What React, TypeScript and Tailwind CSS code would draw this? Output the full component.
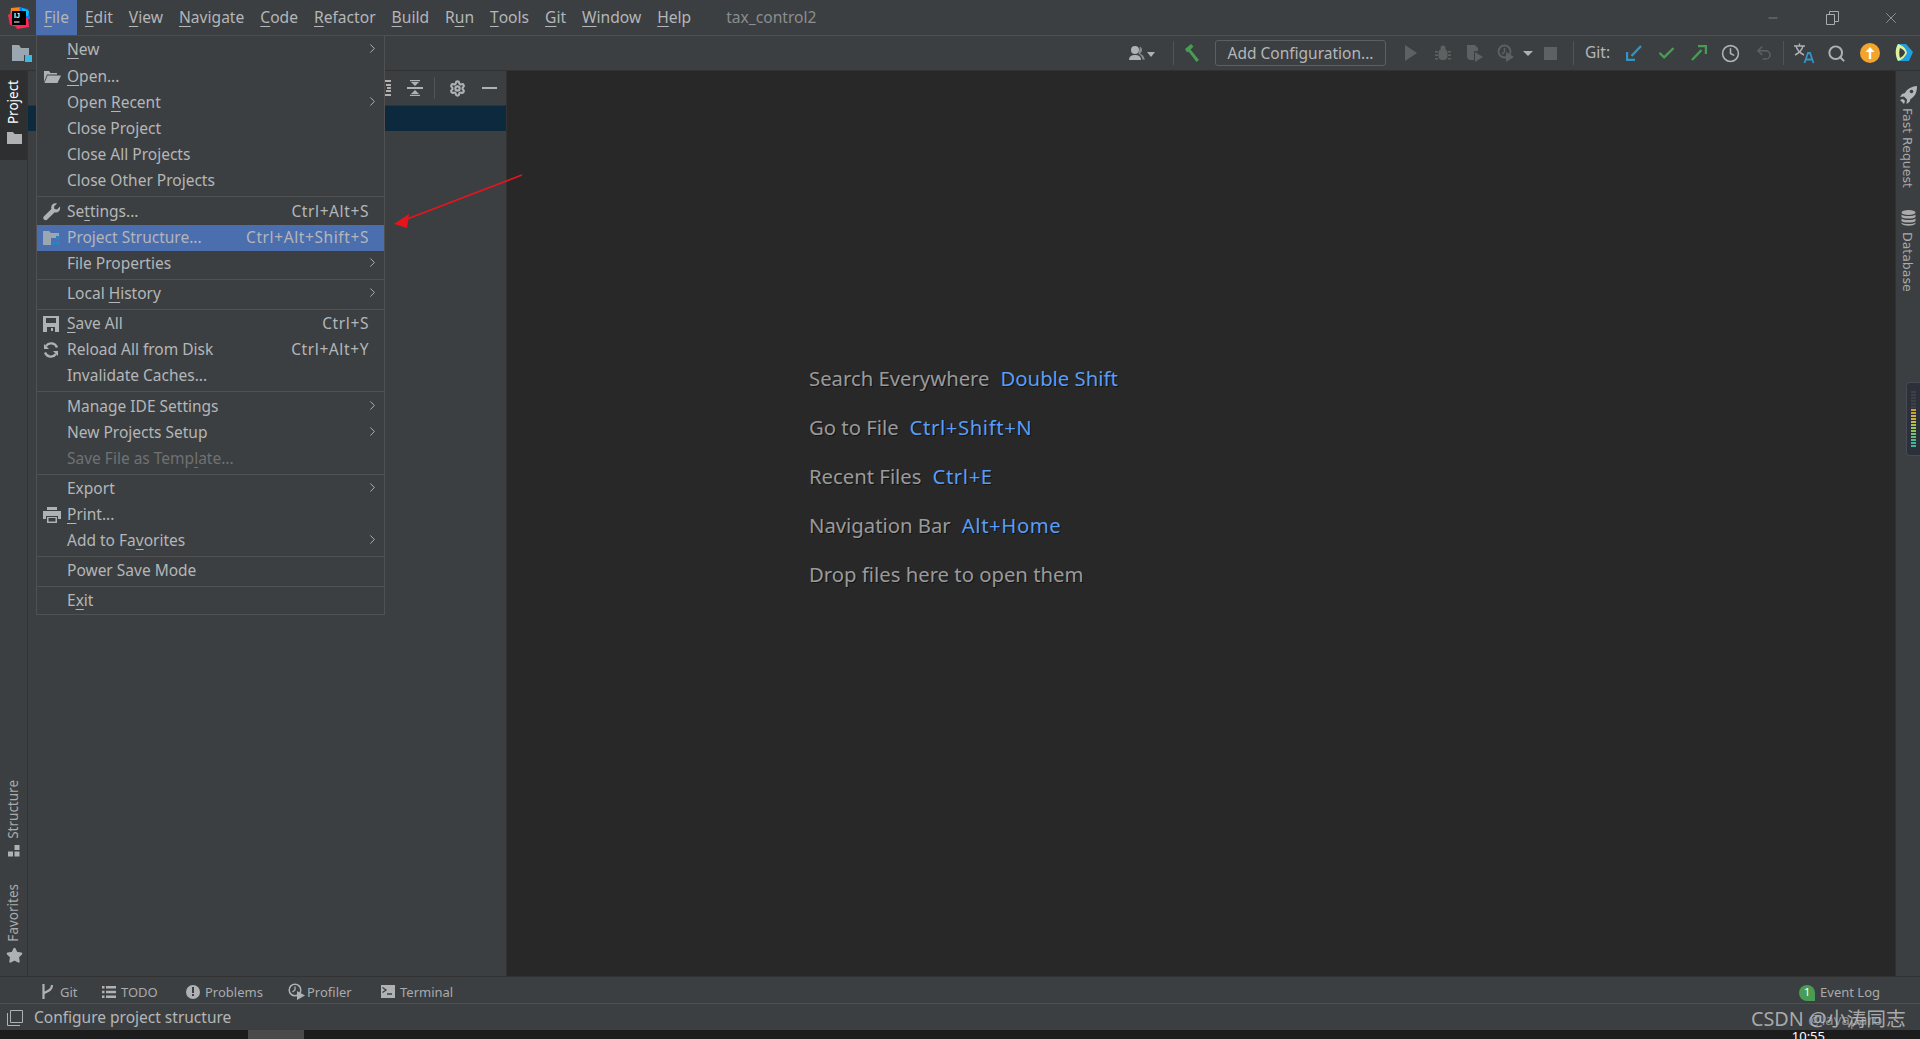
import React from 'react';
import { ChevronRight, Check, Clock, Search, Undo2, Settings, Star, X, Minus } from 'lucide-react';

type Item = { label: string; shortcut?: string; sub?: boolean; icon?: React.ReactNode; active?: boolean; disabled?: boolean; tall?: boolean };

// "_" in a label marks the mnemonic letter
function Mnemonic({ text }: { text: string }) {
  const i = text.indexOf('_');
  if (i < 0) return <>{text}</>;
  return (
    <>
      {text.slice(0, i)}
      <span className="underline decoration-1 underline-offset-[3px]">{text[i + 1]}</span>
      {text.slice(i + 2)}
    </>
  );
}

const OpenIcon = () => (
  <svg width="18" height="14" viewBox="0 0 18 14"><path d="M1 1h5l1.500 2H14v1.500H4L1 12z" fill="#afb1b3" /><path d="M4.500 5.500H18L14.500 13H1.500z" fill="#afb1b3" /></svg>
);
const WrenchIcon = () => (
  <svg width="18" height="18" viewBox="0 0 18 18"><path d="M17 3.500 14 6.500 11.500 6 11 3.500 14 .6C11.500-.4 8.500 1 8.200 4c-.1.800 0 1.500.2 2L1 13.300c-1 1-.9 2.400 0 3.300s2.300 1 3.300 0L11.700 9.200c3 1 6.200-1.500 5.300-5.700z" fill="#afb1b3" /></svg>
);
const StructureIcon = () => (
  <svg width="18" height="16" viewBox="0 0 18 16"><path d="M0 1h6l2 2h8v5H8v7H0z" fill="#9aa7b0" /><rect x="13" y="6" width="4" height="4" fill="#2f7fc1" /><rect x="8.500" y="11" width="4" height="4" fill="#2f7fc1" /><rect x="13" y="11" width="4" height="4" fill="#2f7fc1" /></svg>
);
const SaveIcon = () => (
  <svg width="16" height="16" viewBox="0 0 16 16"><path d="M0 0h16v16H0z" fill="#afb1b3" /><rect x="3" y="2" width="10" height="5" fill="#3c3f41" /><rect x="4" y="11" width="8" height="5" fill="#3c3f41" /><rect x="8" y="12" width="2" height="3" fill="#afb1b3" /></svg>
);
const ReloadIcon = () => (
  <svg width="16" height="16" viewBox="0 0 16 16" fill="none" stroke="#afb1b3" strokeWidth="2.200"><path d="M14 5.500A6.300 6.300 0 0 0 3 4" /><path d="M2 10.500A6.300 6.300 0 0 0 13 12" /><path d="M1 2v5h5" fill="#afb1b3" stroke="none" /><path d="M15 14V9h-5" fill="#afb1b3" stroke="none" /></svg>
);
const PrintIcon = () => (
  <svg width="18" height="16" viewBox="0 0 18 16"><rect x="4" y="0" width="10" height="3" fill="#afb1b3" /><path d="M0 4h18v8h-3V9H3v3H0z" fill="#afb1b3" /><path d="M4 10h10v6H4z" fill="#afb1b3" /><rect x="5.500" y="11" width="7" height="3.500" fill="#3c3f41" /></svg>
);

const sections: Item[][] = [
  [
    { label: '_New', sub: true, tall: true },
    { label: '_Open...', icon: <OpenIcon />, tall: true },
    { label: 'Open _Recent', sub: true },
    { label: 'Close Project' },
    { label: 'Close All Projects' },
    { label: 'Close Other Projects' },
  ],
  [
    { label: 'Se_ttings...', shortcut: 'Ctrl+Alt+S', icon: <WrenchIcon />, tall: true },
    { label: 'Project Structure...', shortcut: 'Ctrl+Alt+Shift+S', icon: <StructureIcon />, active: true },
    { label: 'File Properties', sub: true },
  ],
  [{ label: 'Local _History', sub: true }],
  [
    { label: '_Save All', shortcut: 'Ctrl+S', icon: <SaveIcon /> },
    { label: 'Reload All from Disk', shortcut: 'Ctrl+Alt+Y', icon: <ReloadIcon /> },
    { label: 'Invalidate Caches...' },
  ],
  [
    { label: 'Manage IDE Settings', sub: true, tall: true },
    { label: 'New Projects Setup', sub: true },
    { label: 'Save File as Temp_late...', disabled: true },
  ],
  [
    { label: 'Export', sub: true },
    { label: '_Print...', icon: <PrintIcon /> },
    { label: 'Add to Fa_vorites', sub: true },
  ],
  [{ label: 'Power Save Mode' }],
  [{ label: 'E_xit' }],
];

function MenuRow({ item }: { item: Item }) {
  return (
    <div className={`flex items-center pl-[6px] ${item.tall ? 'h-[27px]' : 'h-[26px]'} ${item.active ? 'bg-[#4b6eaf]' : ''} ${item.disabled ? 'text-[#6f7173]' : 'text-[#b4b6b8]'}`}>
      <span className="w-[24px] flex items-center justify-start">{item.icon}</span>
      <span className="flex-1 whitespace-nowrap"><Mnemonic text={item.label} /></span>
      {item.shortcut && <span className="pr-[15px] whitespace-nowrap tracking-[0.6px]">{item.shortcut}</span>}
      {item.sub && <ChevronRight size={15} strokeWidth={1.500} className="mr-[4px] -mt-[3px] text-[#b4b6b8]" />}
    </div>
  );
}

function FileMenu() {
  return (
    <div className="absolute left-[36px] top-[35px] w-[349px] bg-[#3c3f41] border border-[#515151] border-t-[#4a4c4e] text-[15.500px] z-20">
      {sections.map((s, i) => (
        <div key={i}>
          {i > 0 && <div className="h-[4px] flex items-center"><div className="h-px w-full bg-[#515151]" /></div>}
          {s.map((item) => <MenuRow key={item.label} item={item} />)}
        </div>
      ))}
    </div>
  );
}

const menus = ['_File', '_Edit', '_View', '_Navigate', '_Code', '_Refactor', '_Build', 'R_un', '_Tools', '_Git', '_Window', '_Help'];

function IdeaLogo() {
  return (
    <svg width="22" height="22" viewBox="0 0 22 22">
      <polygon points="3,1 13,0 12,9 2,11" fill="#fc801d" />
      <polygon points="0,8 6,4 9,20 2,18" fill="#fe2857" />
      <polygon points="11,0 20,2 22,12 14,11" fill="#087cfa" />
      <polygon points="6,16 20,10 21,20 9,22" fill="#fe2857" />
      <polygon points="14,1 21,4 20,9 15,8" fill="#07c3f2" />
      <rect x="4" y="4" width="14" height="14" fill="#000" />
      <text x="6" y="11" fontSize="7" fontWeight="700" fill="#fff" fontFamily="Liberation Sans, sans-serif">IJ</text>
      <rect x="6" y="14.500" width="5.500" height="1" fill="#fff" />
    </svg>
  );
}

function TitleBar() {
  return (
    <div className="h-[36px] shrink-0 flex items-stretch bg-[#3c3f41] border-b border-[#4d4f51] text-[15.600px] text-[#b4b6b8]">
      <div className="w-[36px] flex items-center justify-center pl-[2px]"><IdeaLogo /></div>
      <div className="flex items-stretch">
        {menus.map((m, i) => (
          <div key={m} className={`flex items-center px-[8px] ${i === 0 ? 'bg-[#4b6eaf]' : ''}`}><Mnemonic text={m} /></div>
        ))}
      </div>
      <div className="ml-[27px] flex items-center text-[#8b8d8f]">tax_control2</div>
      <div className="ml-auto flex items-center text-[#a9abad]">
        <Minus size={14} strokeWidth={1} className="mr-[46px]" />
        <svg width="13" height="14" viewBox="0 0 13 14" fill="none" stroke="#a9abad" className="mr-[43px]"><path d="M.500 3.500h8v10h-8zM3.500 3.500v-3h9v10h-4" /></svg>
        <X size={18} strokeWidth={1} className="mr-[20px]" />
      </div>
    </div>
  );
}

const Slot = ({ w = 'w-[33px]', children }: { w?: string; children: React.ReactNode }) => (
  <div className={`${w} flex items-center justify-center shrink-0`}>{children}</div>
);
const Sep = () => <div className="w-px h-[24px] bg-[#515355] mx-[3px]" />;

function Toolbar() {
  return (
    <div className="h-[35px] shrink-0 flex items-center bg-[#3c3f41] border-b border-[#323232]">
      <div className="pl-[12px]">
        <svg width="20" height="17" viewBox="0 0 20 17"><path d="M0 0h7l2 3h8v7h-5v6H0z" fill="#9aa7b0" /><rect x="13" y="10" width="7" height="7" fill="#40b6e0" /></svg>
      </div>
      <div className="ml-auto flex items-center pr-[1px]">
        <div className="flex items-center mr-[14px]">
          <svg width="16" height="16" viewBox="0 0 16 16"><circle cx="6" cy="5" r="4" fill="#afb1b3" /><path d="M0 15c0-4 3-5 6-5s6 1 6 5z" fill="#afb1b3" /><path d="M11 1.500a4 4 0 0 1 0 7l3 2 2 4h-2.500c-.5-3-2-4.500-4-5.500z" fill="#8a8c8e" /></svg>
          <svg width="10" height="5" viewBox="0 0 10 5" className="ml-[1px] mt-[2px]"><path d="M1 0h8L5 5z" fill="#afb1b3" /></svg>
        </div>
        <Sep />
        <Slot w="w-[32px]">
          <svg width="20" height="20" viewBox="0 0 20 20"><path d="M2 6 8 1l2.500 2.500L7.500 6.500 16 17l-2.500 2L5.500 8.500 4 9.500z" fill="#499c54" /></svg>
        </Slot>
        <div className="h-[26px] w-[171px] mr-[9px] ml-[6px] pt-[1px] flex items-center justify-center rounded-[3px] border border-[#5e6060] text-[15.500px] text-[#b4b6b8]">Add Configuration...</div>
        <Slot w="w-[32px]"><svg width="14" height="16" viewBox="0 0 14 16"><path d="M1 0l12 8-12 8z" fill="#5e6061" /></svg></Slot>
        <Slot w="w-[32px]">
          <svg width="16" height="16" viewBox="0 0 16 16" fill="#5e6061"><rect x="3.500" y="4" width="9" height="11" rx="4" /><circle cx="8" cy="3" r="2.500" /><path d="M0 6h3v1.500H0zM13 6h3v1.500h-3zM0 9.500h3V11H0zM13 9.500h3V11h-3zM0 13h3v1.500H0zM13 13h3v1.500h-3z" /></svg>
        </Slot>
        <Slot w="w-[31px]">
          <svg width="18" height="18" viewBox="0 0 18 18" fill="#5e6061"><path d="M1 1h8l3 3v3H8v9H3.500L1 13.500z" /><path d="M9 8l8 5-8 5z" /></svg>
        </Slot>
        <Slot w="w-[31px]">
          <svg width="18" height="18" viewBox="0 0 18 18"><circle cx="7.500" cy="7.500" r="6" fill="none" stroke="#5e6061" strokeWidth="1.800" /><path d="M7.500 4v4L5 10" fill="none" stroke="#5e6061" strokeWidth="1.500" /><path d="M9 8l8 5-8 5z" fill="#5e6061" /></svg>
        </Slot>
        <Slot w="w-[14px]"><svg width="10" height="5" viewBox="0 0 10 5"><path d="M0 0h10L5 5z" fill="#afb1b3" /></svg></Slot>
        <Slot w="w-[35px]"><div className="w-[13px] h-[13px] bg-[#5e6061] mr-[4px]" /></Slot>
        <Sep />
        <div className="text-[15.500px] text-[#b4b6b8] ml-[8px] mr-[2px] w-[30px]">Git:</div>
        <Slot>
          <svg width="16" height="16" viewBox="0 0 16 16"><path d="M15 1 5.500 11M1 7v8h8" fill="none" stroke="#3592c4" strokeWidth="2.400" /></svg>
        </Slot>
        <Slot><Check size={19} strokeWidth={3} className="text-[#499c54]" /></Slot>
        <Slot w="w-[31px]">
          <svg width="16" height="16" viewBox="0 0 16 16"><path d="M1 15l9.500-10M7 1h8v8" fill="none" stroke="#499c54" strokeWidth="2.400" /></svg>
        </Slot>
        <Slot><Clock size={19} strokeWidth={2} className="text-[#afb1b3]" /></Slot>
        <Slot><Undo2 size={18} strokeWidth={2} className="text-[#5e6061]" /></Slot>
        <Sep />
        <Slot>
          <svg width="22" height="22" viewBox="0 0 22 22" fill="none"><path d="M1 4h11M6.500 1.500V4M3 4c1 4 4 7 8 9M10 4c-1 4-4 7-8 9" stroke="#afb1b3" strokeWidth="1.400" /><path d="M11.500 21l3.500-10h2l3.500 10M13 17.500h6" stroke="#3592c4" strokeWidth="1.800" /></svg>
        </Slot>
        <Slot><Search size={19} strokeWidth={2.500} className="text-[#afb1b3]" /></Slot>
        <Slot>
          <div className="w-[20px] h-[20px] rounded-full bg-[#f2a42c] flex items-center justify-center">
            <svg width="10" height="12" viewBox="0 0 10 12"><path d="M5 0l4.500 5H6.200v7H3.800V5H.500z" fill="#fff" /></svg>
          </div>
        </Slot>
        <Slot>
          <svg width="20" height="20" viewBox="0 0 20 20"><path d="M5 1h8l7 8-4 9H5c-3-5-3-12 0-17z" fill="#1f9fe0" /><path d="M5 1c4 1 8 4 9 9-2 4-5 7-9 8C2 12 2 6 5 1z" fill="#dff29a" /><path d="M7 5c3 1 5 3 5 5-1 2-3 4-5 5-1-3-1-7 0-10z" fill="#3c3f41" /></svg>
        </Slot>
      </div>
    </div>
  );
}

function LeftStrip() {
  return (
    <div className="w-[28px] shrink-0 flex flex-col items-center border-r border-[#323232] text-[13.500px] text-[#a9abad]">
      <div className="w-full h-[89px] bg-[#2d2f30] flex flex-col items-center pt-[9px] pl-[1px] text-white">
        <span className="[writing-mode:vertical-rl] rotate-180 leading-none">Project</span>
        <svg width="15" height="12" viewBox="0 0 15 12" className="mt-[8px]"><path d="M0 0h6l1.500 2H15v10H0z" fill="#afb1b3" /></svg>
      </div>
      <div className="mt-auto flex flex-col items-center pl-[1px]">
        <span className="[writing-mode:vertical-rl] rotate-180 leading-none">Structure</span>
        <svg width="12" height="12" viewBox="0 0 12 12" className="mt-[7px]" fill="#afb1b3"><rect x="6.500" y="0" width="5" height="5" /><rect x="0" y="6.500" width="5" height="5" /><rect x="6.500" y="6.500" width="5" height="5" /></svg>
        <span className="[writing-mode:vertical-rl] rotate-180 leading-none mt-[27px]">Favorites</span>
        <Star size={17} fill="#afb1b3" stroke="#afb1b3" className="mt-[5px] mb-[12px]" />
      </div>
    </div>
  );
}

function ProjectPanel() {
  return (
    <div className="w-[479px] shrink-0 flex flex-col bg-[#3c3f41] border-r border-[#323232]">
      <div className="h-[35px] flex items-center justify-end border-b border-[#323232]">
        <svg width="8" height="16" viewBox="0 0 8 16" fill="#afb1b3" className="mr-[16px]"><path d="M0 0h8v2H0zM3 4h5v2H3zM4 7h4v2H4zM3 10h5v2H3zM0 14h8v2H0z" /></svg>
        <svg width="16" height="16" viewBox="0 0 16 16" fill="#afb1b3" className="mr-[11px]"><path d="M0 7h16v2H0zM8 6 4 2h8zM8 10l4 4H4zM3 0h10v1.200H3zM3 14.800h10V16H3z" /></svg>
        <div className="w-px h-[22px] bg-[#515355] mr-[14px]" />
        <Settings size={17} strokeWidth={3} className="text-[#afb1b3] mr-[16px]" />
        <div className="w-[15px] h-[2px] bg-[#afb1b3] mr-[9px]" />
      </div>
      <div className="h-[25px] bg-[#0d293e]" />
    </div>
  );
}

function Hint({ label, keys }: { label: string; keys?: string }) {
  return (
    <div className="h-[49px] flex items-center text-[20.300px] whitespace-nowrap [text-shadow:1px_1px_0_#141414]">
      <span className="text-[#9a9a9a]">{label}</span>
      {keys && <span className={`ml-[11px] text-[#589df6] ${keys.includes('+') ? 'tracking-[0.6px]' : ''}`}>{keys}</span>}
    </div>
  );
}

function Editor() {
  return (
    <div className="flex-1 bg-[#282828] pl-[302px] pt-[283px]">
      <Hint label="Search Everywhere" keys="Double Shift" />
      <Hint label="Go to File" keys="Ctrl+Shift+N" />
      <Hint label="Recent Files" keys="Ctrl+E" />
      <Hint label="Navigation Bar" keys="Alt+Home" />
      <Hint label="Drop files here to open them" />
    </div>
  );
}

const meter = ['#3d4045', '#3d4045', '#3d4045', '#3d4045', '#3d4045', '#3d4045', '#c8a030', '#c8a030', '#c8b43a', '#c8b43a', '#b8c040', '#a2c44a', '#a2c44a', '#8cc45a', '#74c46a', '#5cc07a', '#48bc8a', '#38b89a', '#38b89a'];

function RightStrip() {
  return (
    <div className="w-[25px] shrink-0 flex flex-col items-center bg-[#3c3f41] border-l border-[#323232] text-[#a9abad] text-[12.500px]">
      <svg width="17" height="18" viewBox="0 0 17 18" className="mt-[15px]" fill="#b4b6b8"><path d="M17 0c-6 .500-10 3-12 7l-3 1-2 3 4-.500 3 3L6.500 18l3-2 1-3c4-2 6.500-6 6.500-13z" /><circle cx="11.500" cy="5.500" r="1.800" fill="#3c3f41" /><path d="M0 14l3-1 2 2-1 3z" /></svg>
      <span className="[writing-mode:vertical-rl] leading-none mt-[4px] -ml-[2px] font-['DejaVu_Sans']">Fast Request</span>
      <svg width="15" height="16" viewBox="0 0 15 16" className="mt-[22px]" fill="#a9abad"><ellipse cx="7.500" cy="2.500" rx="7" ry="2.500" /><path d="M.500 4.500c2 2 12 2 14 0v2.500c-2 2-12 2-14 0zM.500 8.500c2 2 12 2 14 0V11c-2 2-12 2-14 0zM.500 12.500c2 2 12 2 14 0v1c-2 3-12 3-14 0z" /></svg>
      <span className="[writing-mode:vertical-rl] leading-none mt-[6px] -ml-[2px] font-['DejaVu_Sans']">Database</span>
      <div className="self-end mt-[90px] w-[14px] h-[74px] bg-[#2b303b] border border-[#454a55] border-r-0 rounded-l-[4px] flex flex-col justify-center gap-[1px] pl-[4px]">
        {meter.map((c, i) => (
          <div key={i} className="w-[5px] h-[2px]" style={{ backgroundColor: c }} />
        ))}
      </div>
    </div>
  );
}

function ToolTab({ icon, label, w }: { icon: React.ReactNode; label: string; w: string }) {
  return (
    <div className={`${w} shrink-0 flex items-center`}>
      <span className="w-[19px] shrink-0 flex items-center -mt-[2px]">{icon}</span>
      <span>{label}</span>
    </div>
  );
}

function BottomBars() {
  return (
    <div className="shrink-0">
      <div className="h-[28px] flex items-center pl-[41px] pr-[40px] pt-[5px] bg-[#3c3f41] border-t border-[#323232] border-b border-b-[#4d4f51] text-[13px] text-[#a9abad]">
        <ToolTab w="w-[61px]" label="Git" icon={
          <svg width="13" height="15" viewBox="0 0 13 15" fill="none" stroke="#afb1b3" strokeWidth="2.200"><path d="M2.500 0v15M11 1c0 5-4 6-8 8" /></svg>
        } />
        <ToolTab w="w-[84px]" label="TODO" icon={
          <svg width="14" height="12" viewBox="0 0 14 12" fill="#afb1b3"><path d="M0 0h2.500v2.500H0zM4 0h10v2.500H4zM0 4.700h2.500v2.500H0zM4 4.700h10v2.500H4zM0 9.400h2.500v2.500H0zM4 9.400h10v2.500H4z" /></svg>
        } />
        <ToolTab w="w-[102px]" label="Problems" icon={
          <div className="w-[14px] h-[14px] rounded-full bg-[#afb1b3] flex flex-col items-center justify-center gap-[1px]"><div className="w-[2px] h-[6px] bg-[#3c3f41]" /><div className="w-[2px] h-[2px] bg-[#3c3f41]" /></div>
        } />
        <ToolTab w="w-[93px]" label="Profiler" icon={
          <svg width="17" height="17" viewBox="0 0 17 17"><circle cx="7" cy="7" r="5.800" fill="none" stroke="#afb1b3" strokeWidth="1.500" /><path d="M7 3.500V7L4.500 9" fill="none" stroke="#afb1b3" strokeWidth="1.300" /><path d="M9 8l8 4.500L9 17z" fill="#afb1b3" /></svg>
        } />
        <ToolTab w="w-[72px]" label="Terminal" icon={
          <svg width="14" height="13" viewBox="0 0 14 13"><rect width="14" height="13" fill="#afb1b3" /><path d="M1.500 2.500 5 5 1.500 7.500M6 9h5" fill="none" stroke="#3c3f41" strokeWidth="1.300" /></svg>
        } />
        <div className="ml-auto flex items-center">
          <div className="w-[16px] h-[16px] rounded-tl-full rounded-tr-full rounded-bl-full bg-[#499c54] text-white text-[11px] flex items-center justify-center mr-[5px]">1</div>
          <span>Event Log</span>
        </div>
      </div>
      <div className="h-[26px] flex items-center pl-[7px] pt-[1px] bg-[#3c3f41] text-[15.500px] text-[#b4b6b8]">
        <svg width="16" height="16" viewBox="0 0 16 16" fill="none" stroke="#afb1b3" className="mr-[11px]"><path d="M3.500.500h12v12h-12z" /><path d="M.500 3v12.500H13" /></svg>
        <span>Configure project structure</span>
      </div>
      <div className="h-[9px] bg-[#1c1c1c] flex items-stretch overflow-hidden">
        <div className="ml-[248px] w-[56px] bg-[#4a4a4a]" />
        <div className="ml-auto mr-[95px] text-white text-[13px] leading-[13px]">10:55</div>
      </div>
    </div>
  );
}

export default function App() {
  return (
    <div className="relative h-screen flex flex-col overflow-hidden bg-[#3c3f41] font-['Noto_Sans','Open_Sans',sans-serif]">
      <TitleBar />
      <Toolbar />
      <div className="flex-1 min-h-0 flex">
        <LeftStrip />
        <ProjectPanel />
        <Editor />
        <RightStrip />
      </div>
      <BottomBars />

      <FileMenu />

      {/* annotation arrow */}
      <svg className="absolute left-[385px] top-[165px] z-30" width="150" height="70" viewBox="385 165 150 70">
        <path d="M522 175 402 221" stroke="#e8141c" strokeWidth="1.500" />
        <path d="M394 224 409 214 407 228z" fill="#e8141c" />
      </svg>

      {/* csdn watermark */}
      <div className="absolute left-[1751px] top-[1006px] z-30 text-[19.800px] leading-[26px] text-[#b8b8b8]/90 whitespace-nowrap font-['Noto_Sans','Noto_Sans_CJK_SC',sans-serif]">CSDN @小涛同志</div>
      <div className="absolute left-[1808px] top-[1008px] z-30 text-[15px] leading-[22px] text-[#c4c4c4]/60 whitespace-nowrap">@lavaparo</div>
    </div>
  );
}
